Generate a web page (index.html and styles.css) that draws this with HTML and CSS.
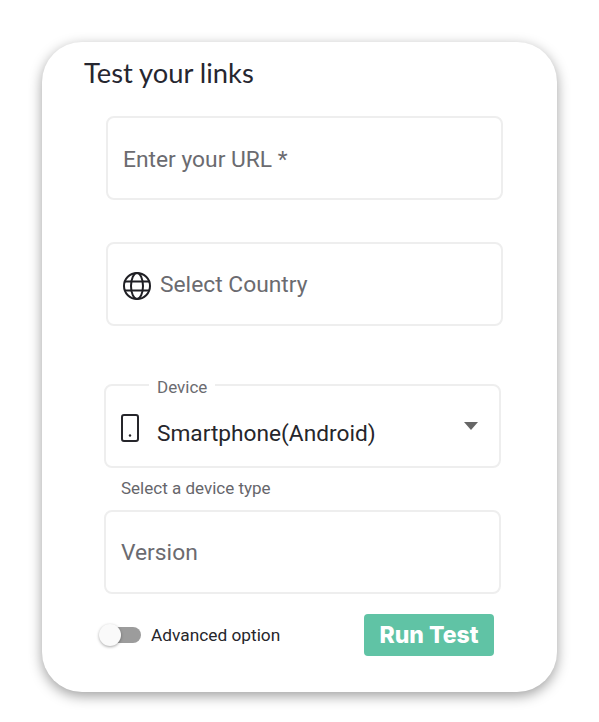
FILE: index.html
```html
<!DOCTYPE html>
<html lang="en">
<head>
    <meta charset="UTF-8">
    <meta name="viewport" content="width=device-width, initial-scale=1.0">
    <title>Test your links</title>
    <link rel="stylesheet" href="styles.css">
</head>
<body>
    <div class="card">
        <h2 class="titre">Test your links</h2>

        <div class="field field_url">
            <span class="placeholder">Enter your URL *</span>
        </div>

        <div class="field field_country">
            <svg class="globe" width="28" height="28" viewBox="0 0 28 28" fill="none" stroke="#1f1f24" stroke-width="2">
                <circle cx="14" cy="14" r="13"/>
                <ellipse cx="14" cy="14" rx="6" ry="13"/>
                <path d="M2 9.5h24M2 18.5h24"/>
            </svg>
            <span class="placeholder">Select Country</span>
        </div>

        <fieldset class="field_device">
            <legend>Device</legend>
            <svg class="phone" width="18" height="28" viewBox="0 0 18 28" fill="none" stroke="#26262b" stroke-width="2">
                <rect x="1" y="1" width="16" height="26" rx="2"/>
                <circle cx="9" cy="21.5" r="1.2" fill="#26262b" stroke="none"/>
            </svg>
            <span class="device_value">Smartphone(Android)</span>
            <span class="arrow"></span>
        </fieldset>
        <p class="helper">Select a device type</p>

        <div class="field field_version">
            <span class="placeholder">Version</span>
        </div>

        <div class="bottom">
            <div class="toggle">
                <span class="track"><span class="thumb"></span></span>
                <span class="toggle_label">Advanced option</span>
            </div>
            <button class="run">Run Test</button>
        </div>
    </div>
</body>
</html>
```

FILE: styles.css
```css
body {
    margin: 0;
    padding: 42px 0 30px 42px;
    background: #ffffff;
    font-family: Roboto, sans-serif;
}

.card {
    width: 515px;
    height: 650px;
    box-sizing: border-box;
    padding-top: 13px;
    background: #ffffff;
    border-radius: 40px;
    box-shadow: 0 4px 13px rgba(0, 0, 0, 0.38);
}

.titre {
    margin: 0 0 26px 42px;
    font-family: Lato, sans-serif;
    font-size: 27.3px;
    font-weight: 400;
    line-height: 35px;
    color: #262630;
}

.field {
    display: flex;
    align-items: center;
    box-sizing: border-box;
    width: 397px;
    height: 84px;
    background: #ffffff;
    border: 2px solid #eeeeee;
    border-radius: 8px;
}

.field_url,
.field_country {
    margin-left: 64px;
}

.field_url {
    margin-bottom: 42px;
    padding: 2px 0 0 15px;
}

.field_country {
    padding-left: 15px;
    margin-bottom: 47px;
}

.placeholder {
    font-size: 22.8px;
    color: #6b6b70;
}

.globe {
    margin-right: 9px;
    margin-top: 4px;
}

.field_device {
    position: relative;
    box-sizing: border-box;
    width: 397px;
    height: 95px;
    margin: 0 0 0 62px;
    padding: 0;
    border: 2px solid #eeeeee;
    border-radius: 8px;
}

.field_device legend {
    margin-left: 43px;
    padding: 5px 8px 0;
    font-size: 17px;
    line-height: 19px;
    color: #6b6b70;
}

.phone {
    position: absolute;
    left: 15px;
    top: 17px;
}

.device_value {
    display: block;
    margin: 23px 0 0 51px;
    font-size: 22.7px;
    line-height: 28px;
    color: #26262b;
}

.arrow {
    position: absolute;
    right: 21px;
    top: 25px;
    border-top: 8px solid #666666;
    border-left: 7px solid transparent;
    border-right: 7px solid transparent;
}

.helper {
    margin: 10px 0 11px 79px;
    font-size: 17px;
    line-height: 21px;
    color: #66666b;
}

.field_version {
    margin-left: 62px;
    padding-left: 15px;
}

.bottom {
    display: flex;
    align-items: center;
    justify-content: space-between;
    width: 394px;
    margin: 20px 0 0 58px;
}

.toggle {
    display: flex;
    align-items: center;
    gap: 10px;
}

.track {
    position: relative;
    display: block;
    width: 41px;
    height: 16px;
    background: #9c9c9c;
    border-radius: 8px;
}

.thumb {
    position: absolute;
    left: -1px;
    top: -3px;
    width: 22px;
    height: 22px;
    background: #fafafa;
    border-radius: 50%;
    box-shadow: 0 1px 3px rgba(0, 0, 0, 0.35);
}

.toggle_label {
    font-size: 17.3px;
    color: #26262b;
}

.run {
    width: 130px;
    height: 42px;
    padding: 0;
    background: #60c3a5;
    color: #ffffff;
    border: none;
    border-radius: 4px;
    font-family: Inter, sans-serif;
    font-size: 23px;
    font-weight: 800;
    cursor: pointer;
}
```
